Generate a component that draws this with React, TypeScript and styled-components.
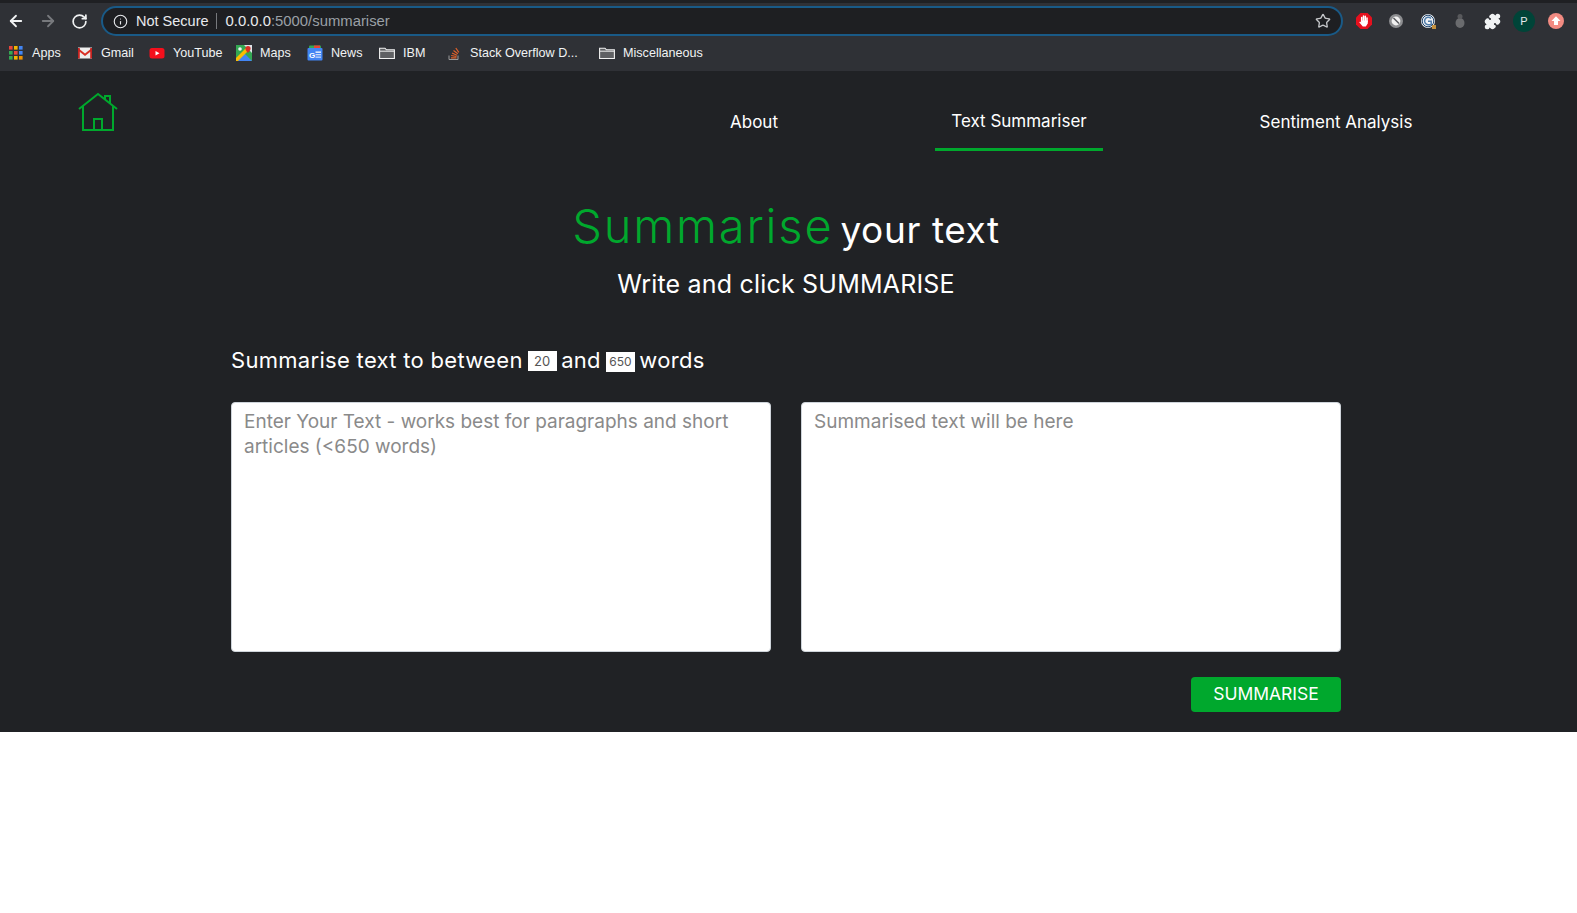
import React from "react"
import styled, { createGlobalStyle } from "styled-components"
import { ArrowLeft, ArrowRight, RotateCw, Info, Star, Puzzle } from "lucide-react"

const bookmarks = [
  { label: "Apps", icon: "apps", width: 69 },
  { label: "Gmail", icon: "gmail", width: 72 },
  { label: "YouTube", icon: "youtube", width: 87 },
  { label: "Maps", icon: "maps", width: 71 },
  { label: "News", icon: "news", width: 72 },
  { label: "IBM", icon: "folder", width: 67 },
  { label: "Stack Overflow D...", icon: "stack", width: 153 },
  { label: "Miscellaneous", icon: "folder", width: 120 },
]

const BookmarkIcon = ({ kind }: { kind: string }) => {
  if (kind === "apps") {
    const colors = ["#e8453c", "#f4b400", "#4285f4", "#34a853", "#e8453c", "#4285f4", "#34a853", "#f4b400", "#f09300"]
    return (
      <svg width="16" height="16" viewBox="0 0 16 16">
        {colors.map((c, i) => (
          <rect key={i} x={1 + (i % 3) * 5} y={1 + Math.floor(i / 3) * 5} width="3.6" height="3.6" fill={c} />
        ))}
      </svg>
    )
  }
  if (kind === "gmail") {
    return (
      <svg width="16" height="16" viewBox="0 0 16 16">
        <rect x="1" y="2.5" width="14" height="11" fill="#eee" />
        <path d="M1 3l7 5.5L15 3v2.6L8 11 1 5.600z" fill="#d93025" />
        <rect x="1" y="3" width="1.800" height="10.500" fill="#c5221f" />
        <rect x="13.200" y="3" width="1.800" height="10.500" fill="#c5221f" />
      </svg>
    )
  }
  if (kind === "youtube") {
    return (
      <svg width="16" height="16" viewBox="0 0 16 16">
        <rect x="0.500" y="3" width="15" height="10.500" rx="2.500" fill="#f50f1c" />
        <path d="M6.500 6v4.500L10.500 8.200z" fill="#fff" />
      </svg>
    )
  }
  if (kind === "maps") {
    return (
      <svg width="16" height="16" viewBox="0 0 16 16">
        <rect width="16" height="16" fill="#34a853" />
        <path d="M0 16L8 8l8 8z" fill="#4285f4" />
        <path d="M0 16V13L13 0h3v2L2 16z" fill="#fbbc04" />
        <path d="M8 0h8v8z" fill="#dfe3e8" />
        <path d="M12 1a2.600 2.600 0 00-2.600 2.600C9.400 5.400 12 8 12 8s2.600-2.600 2.600-4.400A2.600 2.600 0 0012 1z" fill="#d93025" />
        <circle cx="4" cy="4" r="1.800" fill="#f1f3f4" />
      </svg>
    )
  }
  if (kind === "news") {
    return (
      <svg width="16" height="16" viewBox="0 0 16 16">
        <rect x="2" y="0.500" width="12" height="5" rx="1" fill="#34a853" />
        <rect x="7" y="0.500" width="6" height="4" fill="#ea4335" />
        <rect x="0.500" y="3" width="15" height="12.500" rx="1" fill="#4285f4" />
        <text x="2" y="12.500" fontSize="8" fontWeight="700" fontFamily="Liberation Sans, sans-serif" fill="#fff">G</text>
        <rect x="8.500" y="6.500" width="5.500" height="1.300" fill="#fff" />
        <rect x="8.500" y="9" width="5.500" height="1.300" fill="#c6dafc" />
        <rect x="8.500" y="11.500" width="5.500" height="1.300" fill="#c6dafc" />
      </svg>
    )
  }
  if (kind === "stack") {
    return (
      <svg width="16" height="16" viewBox="0 0 16 16" fill="none">
        <path d="M3 10.500v4h9v-4" stroke="#9a9a9a" strokeWidth="1" />
        <path d="M5 12.800h5.500M5.200 10.500l5.300 1M6 8l5 2.200M7.500 5.500l4.300 3.300M9.800 3l3 4.300" stroke="#e2622a" strokeWidth="1.200" />
      </svg>
    )
  }
  return (
    <svg width="16" height="16" viewBox="0 0 16 16" fill="none">
      <path d="M.600 3.200v10.300h14.800V4.800H7.400L6 3.200z" fill="#5f6063" stroke="#f1f1f1" strokeWidth="1.100" />
      <path d="M1 6.200h14" stroke="#f1f1f1" strokeWidth="1" />
    </svg>
  )
}

const App = () => {
  return (
    <>
      <GlobalStyle />
      <Chrome>
        <TopStrip />
        <Toolbar>
          <NavButtons>
            <ArrowLeft size={18} color="#f1f3f4" strokeWidth={2.400} />
            <ArrowRight size={18} color="#77797d" strokeWidth={2.400} />
            <RotateCw size={17} color="#f1f3f4" strokeWidth={2.400} />
          </NavButtons>
          <Omnibox>
            <Info size={15} color="#e8eaed" strokeWidth={1.800} />
            <NotSecure>Not Secure</NotSecure>
            <Separator />
            <Url>
              0.0.0.0<UrlDim>:5000/summariser</UrlDim>
            </Url>
            <StarSlot>
              <Star size={16} color="#c4c6c9" strokeWidth={2} />
            </StarSlot>
          </Omnibox>
          <Extensions>
            <svg width="18" height="18" viewBox="0 0 18 18">
              <path d="M5.500 1h7L17 5.500v7L12.500 17h-7L1 12.500v-7z" fill="#e5101e" />
              <path d="M6.700 9V5.500M8.500 9V4M10.300 9V4.300M12 9.500V6" stroke="#fff" strokeWidth="1.500" strokeLinecap="round" />
              <path d="M5.900 8.500h6.900v3L10.800 14.500H7.800L4.200 10.300l1-.8 1 1z" fill="#fff" />
            </svg>
            <svg width="16" height="16" viewBox="0 0 16 16">
              <circle cx="8" cy="8" r="7" fill="#8d8e91" />
              <circle cx="8" cy="8" r="4.400" fill="#f1f1f1" />
              <path d="M5 5.500L10.500 11 11.500 10 6 4.500z" fill="#55565a" />
            </svg>
            <svg width="16" height="16" viewBox="0 0 16 16" fill="none">
              <circle cx="8" cy="8" r="7" fill="#eef1f5" />
              <circle cx="8" cy="8" r="5.800" stroke="#23476f" strokeWidth="1" />
              <path d="M11 5.500A3.700 3.700 0 108 11.700h3.200V8.300H8" stroke="#4f7ba8" strokeWidth="1.500" />
              <rect x="12" y="12" width="4" height="4" fill="#c4913f" />
            </svg>
            <svg width="14" height="16" viewBox="0 0 14 16">
              <ellipse cx="7" cy="10" rx="4.500" ry="5" fill="#6a6b6e" />
              <circle cx="7" cy="3.500" r="2.500" fill="#58595c" />
            </svg>
            <Puzzle size={17} color="#f1f3f4" fill="#f1f3f4" />
            <Avatar>P</Avatar>
            <svg width="16" height="16" viewBox="0 0 16 16">
              <circle cx="8" cy="8" r="8" fill="#f28b82" />
              <path d="M8 3.200L12.500 8H10v4H6V8H3.500z" fill="#fff" />
            </svg>
          </Extensions>
        </Toolbar>
        <BookmarkBar>
          {bookmarks.map((b) => (
            <Bookmark key={b.label} $width={b.width}>
              <BookmarkIcon kind={b.icon} />
              <span>{b.label}</span>
            </Bookmark>
          ))}
        </BookmarkBar>
      </Chrome>
      <Page>
        <Navbar>
          <HomeLink>
            <svg width="40" height="40" viewBox="0 0 40 40" fill="none" stroke="#00a82d" strokeWidth="2">
              <path d="M1 17L20 2l19 15" />
              <path d="M5 14v24h30V14" />
              <path d="M16 38V27h8v11" />
              <path d="M27 7.500V4h5v8" />
            </svg>
          </HomeLink>
          <NavLinks>
            <NavItem $width={362}>About</NavItem>
            <NavItem $width={168} $active>Text Summariser</NavItem>
            <NavItem $width={466}>Sentiment Analysis</NavItem>
          </NavLinks>
        </Navbar>
        <Hero>
          <Title>
            <TitleGreen>Summarise</TitleGreen> your text
          </Title>
          <Subtitle>Write and click SUMMARISE</Subtitle>
        </Hero>
        <Form>
          <WordRange>
            Summarise text to between <RangeBox value="20" readOnly /> and <RangeBox value="650" readOnly $small /> words
          </WordRange>
          <Panels>
            <TextBox placeholder="Enter Your Text - works best for paragraphs and short articles (<650 words)" />
            <TextBox placeholder="Summarised text will be here" />
          </Panels>
          <Actions>
            <SummariseButton>SUMMARISE</SummariseButton>
          </Actions>
        </Form>
      </Page>
    </>
  )
}

export default App

const GlobalStyle = createGlobalStyle`
  html, body {
    margin: 0;
    background: #fff;
  }
  * {
    box-sizing: border-box;
  }
`

const Chrome = styled.div`
  height: 71px;
  background: #2f3136;
  font-family: "Liberation Sans", Arial, sans-serif;
  color: #f1f3f4;
`

const TopStrip = styled.div`
  height: 3px;
  background: #1f2023;
`

const Toolbar = styled.div`
  height: 36px;
  display: flex;
  align-items: center;
`

const NavButtons = styled.div`
  width: 101px;
  display: flex;
  align-items: center;
  gap: 14px;
  padding-left: 7px;
`

const Omnibox = styled.div`
  width: 1242px;
  height: 30px;
  border: 2px solid #195a87;
  border-radius: 15px;
  background: #1e1f22;
  display: flex;
  align-items: center;
  padding: 0 10px;
  font-size: 14.500px;
`

const NotSecure = styled.span`
  margin-left: 8px;
  color: #e8eaed;
`

const Separator = styled.span`
  width: 1px;
  height: 16px;
  background: #77797d;
  margin: 0 9px 0 7px;
`

const Url = styled.span`
  color: #e8eaed;
  font-size: 14.850px;
  padding-bottom: 1px;
`

const UrlDim = styled.span`
  color: #9aa0a6;
`

const StarSlot = styled.span`
  margin-left: auto;
  display: flex;
`

const Extensions = styled.div`
  display: grid;
  grid-template-columns: repeat(7, 32px);
  justify-items: center;
  align-items: center;
  padding-left: 5px;
`

const Avatar = styled.span`
  width: 22px;
  height: 22px;
  border-radius: 50%;
  background: #004438;
  color: #e8eaed;
  font-size: 11px;
  display: flex;
  align-items: center;
  justify-content: center;
`

const BookmarkBar = styled.div`
  height: 32px;
  display: flex;
  align-items: center;
  padding: 0 0 4px 8px;
  font-size: 12.600px;
`

const Bookmark = styled.div<{ $width: number }>`
  width: ${(p) => p.$width}px;
  flex: none;
  display: flex;
  align-items: center;
  gap: 8px;
  white-space: nowrap;
`

const Page = styled.div`
  height: 661px;
  padding-right: 5px;
  background: #202225;
  font-family: Inter, "Open Sans", sans-serif;
  color: #fff;
`

const Navbar = styled.nav`
  height: 80px;
  display: flex;
  justify-content: space-between;
  padding: 21px 3px 0 78px;
`

const HomeLink = styled.a`
  display: block;
  height: 40px;
`

const NavLinks = styled.div`
  display: flex;
  align-items: stretch;
  height: 59px;
`

const NavItem = styled.div<{ $width: number; $active?: boolean }>`
  width: ${(p) => p.$width}px;
  display: flex;
  align-items: center;
  justify-content: center;
  font-size: 17px;
  padding-top: ${(p) => (p.$active ? 2 : 4)}px;
  border-bottom: 3px solid ${(p) => (p.$active ? "#00a82d" : "transparent")};
`

const Hero = styled.div`
  text-align: center;
  padding-top: 45px;
`

const Title = styled.h1`
  margin: 0;
  font-size: 37px;
  font-weight: 400;
  line-height: 60px;
  letter-spacing: 0.600px;
`

const TitleGreen = styled.span`
  color: #00a82d;
  font-size: 47px;
  font-weight: 300;
  letter-spacing: 1.800px;
  margin-right: -4px;
`

const Subtitle = styled.h2`
  margin: 5px 0 0;
  font-size: 25px;
  font-weight: 400;
  line-height: 38px;
  letter-spacing: 0.200px;
`

const Form = styled.div`
  width: 1110px;
  margin: 0 auto;
  padding-top: 39px;
`

const WordRange = styled.div`
  height: 36px;
  font-size: 22px;
  line-height: 36px;
  letter-spacing: 0.300px;
  white-space: nowrap;
`

const RangeBox = styled.input<{ $small?: boolean }>`
  width: 29px;
  height: 20px;
  margin: 0 -2px 0 -1.500px;
  padding: 0;
  border: 0;
  vertical-align: 2px;
  text-align: center;
  font-family: inherit;
  font-size: ${(p) => (p.$small ? "12px" : "13px")};
  color: #555;
  background: #fff;
`

const Panels = styled.div`
  display: grid;
  grid-template-columns: 540px 540px;
  gap: 30px;
  margin-top: 24px;
`

const TextBox = styled.textarea`
  height: 250px;
  border: 1px solid #ced4da;
  border-radius: 4px;
  padding: 6px 12px;
  font-family: inherit;
  font-size: 19px;
  line-height: 25px;
  resize: none;
  background: #fff;
  &::placeholder {
    color: #8a8a8a;
    opacity: 1;
  }
`

const Actions = styled.div`
  display: flex;
  justify-content: flex-end;
  margin-top: 25px;
`

const SummariseButton = styled.button`
  width: 150px;
  height: 35px;
  padding: 0 0 2px;
  border: 0;
  border-radius: 4px;
  background: #00a82d;
  color: #fff;
  font-family: inherit;
  font-size: 17.500px;
`
